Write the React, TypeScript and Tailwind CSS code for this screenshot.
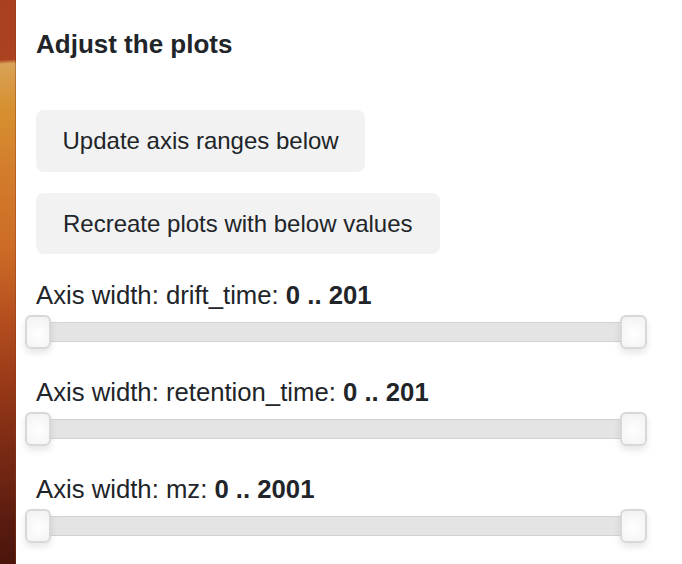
import React from 'react'

interface AxisRange {
  name: string
  min: number
  max: number
}

const axes: AxisRange[] = [
  { name: 'drift_time', min: 0, max: 201 },
  { name: 'retention_time', min: 0, max: 201 },
  { name: 'mz', min: 0, max: 2001 },
]

function RangeSlider() {
  return (
    <div className="relative mt-[5px] -ml-[11px] w-[622px] h-[34px]">
      {/* track */}
      <div className="absolute left-[12px] right-[13px] top-[7px] h-[20px] bg-[#e4e4e4] border border-[#d2d2d2]"></div>
      {/* thumbs */}
      <div className="absolute left-0 top-0 w-[26px] h-[34px] rounded-[6px] border-2 border-[#d8d8d8] bg-[radial-gradient(circle_at_50%_55%,#ffffff,#f1f1f1)] shadow-[0_4px_7px_rgba(0,0,0,0.10)]"></div>
      <div className="absolute right-0 top-0 w-[27px] h-[34px] rounded-[6px] border-2 border-[#d8d8d8] bg-[radial-gradient(circle_at_50%_55%,#ffffff,#f1f1f1)] shadow-[0_4px_7px_rgba(0,0,0,0.10)]"></div>
    </div>
  )
}

export default function App() {
  return (
    <div className="flex w-[682px] h-[564px] overflow-hidden bg-white text-[#212529]" style={{ fontFamily: '"Liberation Sans", Arial, sans-serif' }}>
      {/* desktop wallpaper peeking at the left edge */}
      <div className="w-[16px] shrink-0 h-full border-r border-[#8a3a18]/40 bg-[linear-gradient(176deg,#a9411f_0px,#ab4320_60px,#d9a257_64px,#d6902f_110px,#d37d2c_170px,#cc6b26_250px,#b44e1f_320px,#9a3a18_380px,#7a2a14_450px,#5b1c10_520px,#4a150c_564px)]"></div>

      <div className="flex-1 pl-[20px] pt-[29px]">
        <h4 className="text-[26px] leading-[31px] font-bold">Adjust the plots</h4>

        <div className="mt-[50px] flex flex-col items-start gap-[21px]">
          <button className="bg-[#f2f2f2] rounded-[8px] px-[26.5px] h-[62px] text-[24px] leading-[36px] text-[#212529]">
            Update axis ranges below
          </button>
          <button className="bg-[#f2f2f2] rounded-[8px] px-[27px] h-[61px] text-[24px] leading-[36px] text-[#212529]">
            Recreate plots with below values
          </button>
        </div>

        <div className="mt-[26px] flex flex-col gap-[28px]">
          {axes.map((a) => (
            <div key={a.name}>
              <div className="text-[25.7px] leading-[30px] whitespace-nowrap">
                Axis width: {a.name}: <span className="font-bold">{a.min} .. {a.max}</span>
              </div>
              <RangeSlider />
            </div>
          ))}
        </div>
      </div>
    </div>
  )
}
